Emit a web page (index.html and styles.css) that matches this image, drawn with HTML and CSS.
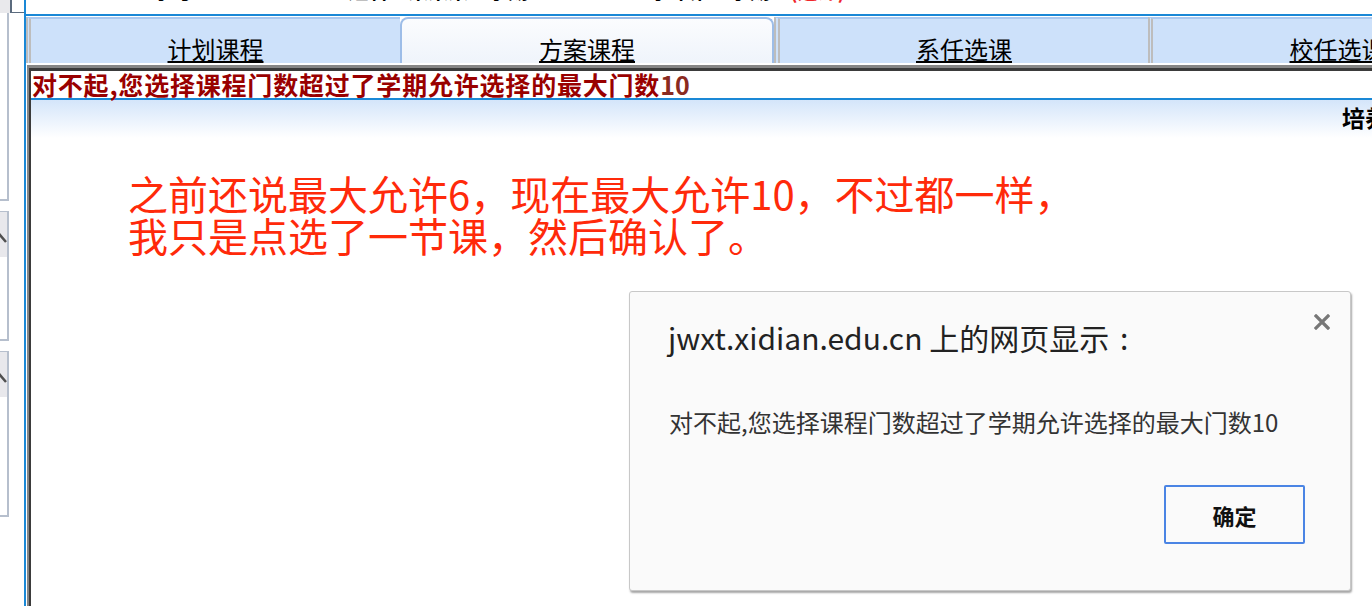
FILE: index.html
```html
<!DOCTYPE html>
<html lang="zh-CN">
<head>
<meta charset="UTF-8">
<title>选课</title>
<link rel="stylesheet" href="styles.css">
</head>
<body>
<div class="page">
    <!-- left menu, mostly cut off -->
    <aside class="side">
        <div class="side-top"><span class="side-box"></span></div>
        <div class="panel panel-first"></div>
        <div class="panel">
            <div class="panel-head">
                <svg width="9" height="45" viewBox="0 0 9 45"><path d="M-6 30 L0 23 L6 30" fill="none" stroke="#505050" stroke-width="2.5"/></svg>
            </div>
        </div>
        <div class="panel panel-last">
            <div class="panel-head">
                <svg width="9" height="45" viewBox="0 0 9 45"><path d="M-6 30 L0 23 L6 30" fill="none" stroke="#505050" stroke-width="2.5"/></svg>
            </div>
        </div>
    </aside>

    <main class="main">
        <div class="topline">
            <div class="topline-text">学号：16030xxxxx　姓名：某某某　学期：2017-2018学年第二学期　<span class="red">(选课)</span></div>
        </div>

        <div class="tabs">
            <div class="tab"><a href="#">计划课程</a></div>
            <div class="tab active"><a href="#">方案课程</a></div>
            <div class="tab"><a href="#">系任选课</a></div>
            <div class="tab"><a href="#">校任选课</a></div>
        </div>

        <div class="frame">
            <div class="frame-in">
                <div class="err">对不起,您选择课程门数超过了学期允许选择的最大门数<span class="num">10</span></div>
                <div class="band">培养方案课程列表</div>
                <div class="note">
                    之前还说最大允许6，现在最大允许10，不过都一样，<br>
                    我只是点选了一节课，然后确认了。
                </div>
            </div>
        </div>
    </main>
</div>

<!-- browser alert -->
<div class="dialog">
    <div class="dialog-title">jwxt.xidian.edu.cn 上的网页显示<span class="colon"> :</span></div>
    <span class="dialog-close">
        <svg width="16" height="16" viewBox="0 0 16 16"><path d="M2 2 L14 14 M14 2 L2 14" stroke="#777" stroke-width="3.2" stroke-linecap="square"/></svg>
    </span>
    <div class="dialog-msg">对不起,您选择课程门数超过了学期允许选择的最大门数10</div>
    <div class="dialog-buttons">
        <button class="ok">确定</button>
    </div>
</div>
</body>
</html>
```

FILE: styles.css
```css
body {
    margin: 0;
    width: 1372px;
    height: 606px;
    overflow: hidden;
    background-color: #fff;
    font-family: "Noto Sans CJK SC", "Noto Sans", sans-serif;
    position: relative;
}
.page {
    display: flex;
    height: 606px;
}
.red {
    color: #f0262a;
}

/* side menu */
.side {
    width: 24px;
    flex-shrink: 0;
    display: flex;
    flex-direction: column;
}
.side-top {
    height: 13px;
    display: flex;
    background: linear-gradient(to right, #e9e9ec 10px, #fff 10px);
}
.side-box {
    margin-left: 10px;
    width: 13px;
    height: 12px;
    border-left: 2px solid #5b6b7e;
    border-bottom: 1px solid #5b6b7e;
}
.panel {
    width: 7px;
    border-right: 2px solid #b6bfcd;
    border-bottom: 2px solid #b6bfcd;
    border-top: 1px solid #b6bfcd;
    height: 127px;
    margin-top: 10px;
    overflow: hidden;
}
.panel-first {
    border-top: none;
    height: 186px;
    margin-top: 0;
}
.panel-last {
    height: 163px;
}
.panel-head {
    height: 45px;
    background-color: #e8e8ec;
}
.panel-head svg {
    display: block;
}

/* main column */
.main {
    flex: 1;
    min-width: 0;
    border-left: 2px solid #1a88d6;
    overflow: hidden;
}
.topline {
    height: 14px;
    overflow: hidden;
    border-bottom: 2px solid #1a88d6;
}
.topline-text {
    margin-top: -19px;
    padding-left: 127px;
    font-size: 20px;
    line-height: 20px;
    font-weight: bold;
    white-space: nowrap;
    color: #000;
}

/* tabs */
.tabs {
    display: flex;
    margin-top: 1px;
    height: 46px;
}
.tab {
    flex: 0 0 374px;
    box-sizing: border-box;
    display: flex;
    align-items: flex-end;
    justify-content: center;
    background-color: #cde1fa;
    border-top: 2px solid #a9c8f0;
    border-left: 5px double #bdbdbd;
    padding-bottom: 1px;
}
.tab a {
    color: #000;
    font-size: 24px;
    line-height: 26px;
    text-decoration: underline;
    text-underline-offset: 2px;
}
.tab.active {
    background: linear-gradient(#fbfcfe, #eff4fb);
    border: 2px solid #9dbde8;
    border-bottom: none;
    border-radius: 8px 8px 0 0;
}
.tab.active + .tab {
    border-left-width: 6px;
}

/* content frame */
.frame {
    margin-top: 2px;
    margin-left: 1px;
    border-top: 3px solid #868686;
    border-left: 2px solid #868686;
    height: 600px;
}
.frame-in {
    border-top: 3px solid #3b3b3b;
    border-left: 2px solid #3b3b3b;
    height: 100%;
}
.err {
    height: 27px;
    padding-left: 1px;
    font-size: 25px;
    line-height: 27px;
    letter-spacing: 0.8px;
    font-weight: bold;
    color: #990000;
    white-space: nowrap;
    border-bottom: 2px solid #1a88d6;
}
.err .num {
    color: #8a2a20;
    letter-spacing: 0;
}
.band {
    height: 38px;
    padding-left: 1311px;
    background: linear-gradient(#d4e5fa, #fff);
    font-size: 23px;
    line-height: 34px;
    font-weight: bold;
    white-space: nowrap;
    color: #000;
}
.note {
    margin: 34px 0 0 97px;
    font-size: 40px;
    line-height: 42px;
    color: #ff2a0a;
    white-space: nowrap;
}

/* alert dialog */
.dialog {
    position: absolute;
    left: 629px;
    top: 291px;
    width: 722px;
    height: 300px;
    box-sizing: border-box;
    padding: 26px 45px 0 38px;
    background-color: #fafafa;
    border: 1px solid #c8c8c8;
    border-radius: 3px;
    box-shadow: 1px 2px 2px rgba(0, 0, 0, 0.35);
    color: #222;
}
.dialog-title {
    font-size: 30px;
    line-height: 38px;
    white-space: nowrap;
}
.colon {
    margin-left: 4px;
}
.dialog-close {
    position: absolute;
    right: 20px;
    top: 22px;
    width: 16px;
    height: 16px;
}
.dialog-close svg {
    display: block;
}
.dialog-msg {
    margin-top: 51px;
    padding-left: 1px;
    font-size: 24px;
    line-height: 30px;
    color: #333;
    white-space: nowrap;
}
.dialog-buttons {
    display: flex;
    justify-content: flex-end;
    margin-top: 48px;
}
.ok {
    width: 141px;
    height: 59px;
    background-color: #fafafa;
    border: 2px solid #4a84e4;
    border-radius: 2px;
    font-family: "Noto Sans CJK SC", sans-serif;
    font-size: 22px;
    font-weight: bold;
    color: #111;
    cursor: pointer;
}
```
